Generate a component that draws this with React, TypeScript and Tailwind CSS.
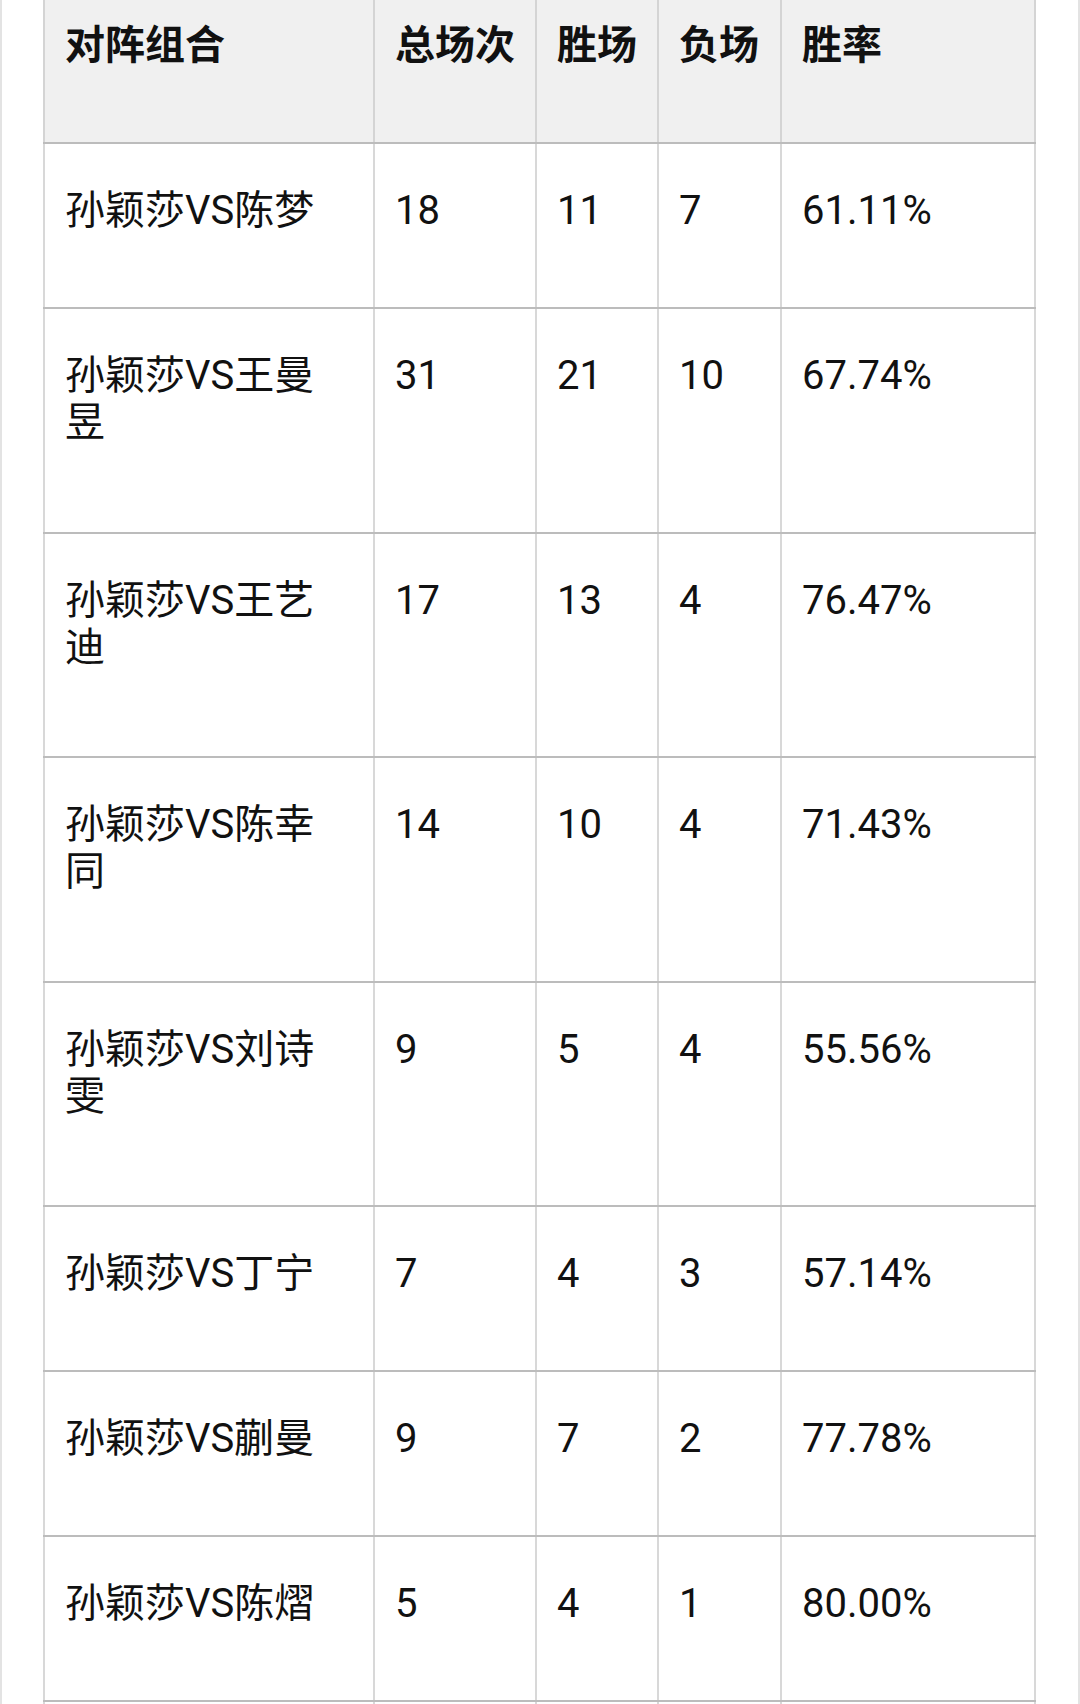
const header = ['对阵组合', '总场次', '胜场', '负场', '胜率'];

const rows = [
  { h: 'h-[165px]', cells: ['孙颖莎VS陈梦', '18', '11', '7', '61.11%'] },
  { h: 'h-[225px]', cells: ['孙颖莎VS王曼昱', '31', '21', '10', '67.74%'] },
  { h: 'h-[224px]', cells: ['孙颖莎VS王艺迪', '17', '13', '4', '76.47%'] },
  { h: 'h-[225px]', cells: ['孙颖莎VS陈幸同', '14', '10', '4', '71.43%'] },
  { h: 'h-[224px]', cells: ['孙颖莎VS刘诗雯', '9', '5', '4', '55.56%'] },
  { h: 'h-[165px]', cells: ['孙颖莎VS丁宁', '7', '4', '3', '57.14%'] },
  { h: 'h-[165px]', cells: ['孙颖莎VS蒯曼', '9', '7', '2', '77.78%'] },
  { h: 'h-[165px]', cells: ['孙颖莎VS陈熠', '5', '4', '1', '80.00%'] },
  { h: 'h-[165px]', cells: ['', '', '', '', ''] },
];

// column widths incl. left border; last one also carries the right border
const cols = [
  'w-[330px] border-l-2 pr-[40px]',
  'w-[162px] border-l-2',
  'w-[122px] border-l-2',
  'w-[123px] border-l-2',
  'w-[256px] border-x-2',
];

export default function App() {
  return (
    <div className="w-[1080px] h-[1704px] overflow-hidden bg-white border-x-2 border-[#e3e3e3] pl-[41px] font-['Roboto','Noto_Sans_CJK_SC',sans-serif] text-[#111]">
      <div className="flex flex-col w-[993px]">
        {/* 表头 */}
        <div className="flex h-[144px] shrink-0 bg-[#f0f0f0] border-b-2 border-[#bcbcbc]">
          {header.map((t, i) => (
            <div
              key={t}
              className={`${cols[i]} shrink-0 border-[#d4d4d4] pl-[20px] pt-[22px] text-[40px] leading-[47px] font-bold`}
            >
              {t}
            </div>
          ))}
        </div>

        {rows.map((r, ri) => (
          <div key={ri} className={`flex ${r.h} shrink-0 border-b-2 border-[#bcbcbc]`}>
            {r.cells.map((c, ci) => (
              <div
                key={ci}
                className={`${cols[ci]} shrink-0 border-[#d8d8d8] pl-[20px] pt-[43px] text-[40px] leading-[47px]`}
              >
                {c}
              </div>
            ))}
          </div>
        ))}
      </div>
    </div>
  );
}
